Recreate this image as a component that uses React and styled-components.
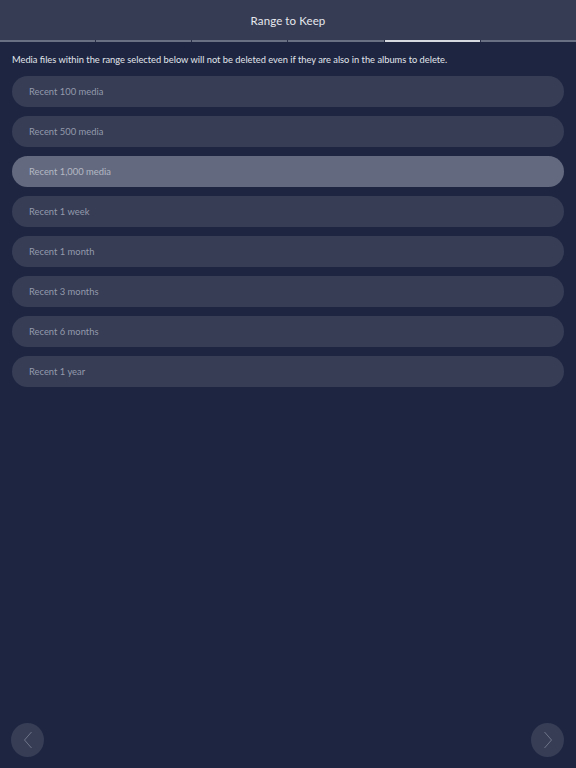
import React from "react";
import styled, { createGlobalStyle } from "styled-components";

const Global = createGlobalStyle`
  html, body { margin: 0; padding: 0; background: #1d2541; }
  body { font-family: Lato, "Open Sans", sans-serif; }
  #root { min-height: 768px; }
`;

const Page = styled.div`
  width: 576px;
  height: 768px;
  display: flex;
  flex-direction: column;
  background: #1d2541;
`;

const Header = styled.header`
  height: 40px;
  background: #363c54;
  display: flex;
  align-items: center;
  justify-content: center;
  color: #e6e8ee;
  font-size: 11.5px;
  letter-spacing: 0.1px;
`;

const Progress = styled.div`
  display: grid;
  grid-template-columns: repeat(6, 1fr);
  gap: 1px;
  height: 2px;
  background: #2a3048;
`;

const Seg = styled.div`
  background: ${(p) => (p.$active ? "#d6d9e0" : "#6a7083")};
`;

const Body = styled.main`
  flex: 1;
  padding: 11px 12px 0;
  display: flex;
  flex-direction: column;
`;

const Note = styled.p`
  margin: 0 0 9px;
  color: #e2e5ec;
  font-size: 9.3px;
  line-height: 14px;
`;

const List = styled.div`
  display: flex;
  flex-direction: column;
  gap: 9px;
`;

const Option = styled.div`
  height: 31px;
  border-radius: 16px;
  background: ${(p) => (p.$selected ? "#636a7f" : "#363d55")};
  color: ${(p) => (p.$selected ? "#b4b8c4" : "#949aab")};
  display: flex;
  align-items: center;
  padding-left: 17px;
  font-size: 9.4px;
`;

const Footer = styled.footer`
  display: flex;
  justify-content: space-between;
  padding: 0 12px 11px 11px;
`;

const NavButton = styled.div`
  width: 33px;
  height: 34px;
  border-radius: 50%;
  background: #363d55;
  display: flex;
  align-items: center;
  justify-content: center;
`;

const Chevron = ({ dir }) => (
  <svg width="10" height="18" viewBox="0 0 10 18">
    <path
      d={dir === "left" ? "M8.5 1 L1.5 9 L8.5 17" : "M1.5 1 L8.5 9 L1.5 17"}
      fill="none"
      stroke="#6f7589"
      strokeWidth="1"
    />
  </svg>
);

const options = [
  "Recent 100 media",
  "Recent 500 media",
  "Recent 1,000 media",
  "Recent 1 week",
  "Recent 1 month",
  "Recent 3 months",
  "Recent 6 months",
  "Recent 1 year",
];

export default function App() {
  return (
    <Page>
      <Global />
      <Header>Range to Keep</Header>
      <Progress>
        {[0, 1, 2, 3, 4, 5].map((i) => (
          <Seg key={i} $active={i === 4} />
        ))}
      </Progress>
      <Body>
        <Note>
          Media files within the range selected below will not be deleted even if they are also in the albums to delete.
        </Note>
        <List>
          {options.map((o, i) => (
            <Option key={o} $selected={i === 2}>
              {o}
            </Option>
          ))}
        </List>
      </Body>
      <Footer>
        <NavButton>
          <Chevron dir="left" />
        </NavButton>
        <NavButton>
          <Chevron dir="right" />
        </NavButton>
      </Footer>
    </Page>
  );
}
